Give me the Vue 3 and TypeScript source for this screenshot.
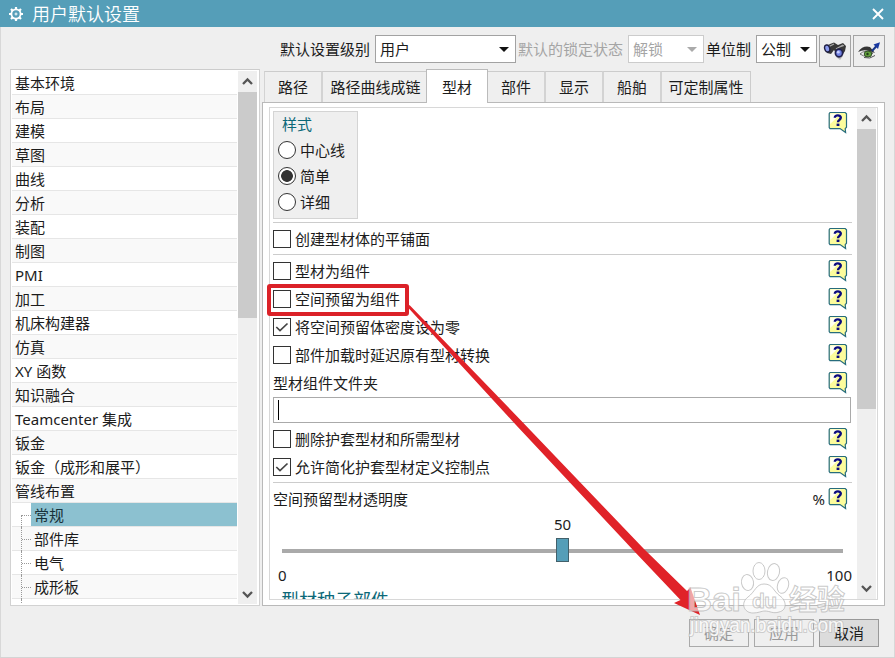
<script setup lang="ts">
import { defineComponent, h } from 'vue'

interface TreeRow { text: string; child?: boolean; selected?: boolean }
interface OptionRow { text: string; kind: 'check' | 'label' | 'percent'; checked?: boolean }

const rows: TreeRow[] = [
  ...['基本环境', '布局', '建模', '草图', '曲线', '分析', '装配', '制图', 'PMI', '加工', '机床构建器', '仿真', 'XY 函数', '知识融合', 'Teamcenter 集成', '钣金', '钣金（成形和展平）', '管线布置'].map((text) => ({ text })),
  { text: '常规', child: true, selected: true },
  { text: '部件库', child: true },
  { text: '电气', child: true },
  { text: '成形板', child: true },
]
const tabs: string[] = ['路径', '路径曲线成链', '型材', '部件', '显示', '船舶', '可定制属性']
const styles: string[] = ['中心线', '简单', '详细']
const componentOptions: OptionRow[] = [
  { text: '型材为组件', kind: 'check' },
  { text: '空间预留为组件', kind: 'check' },
  { text: '将空间预留体密度设为零', kind: 'check', checked: true },
  { text: '部件加载时延迟原有型材转换', kind: 'check' },
  { text: '型材组件文件夹', kind: 'label' },
]
const jacketOptions: OptionRow[] = [
  { text: '删除护套型材和所需型材', kind: 'check' },
  { text: '允许简化护套型材定义控制点', kind: 'check', checked: true },
]

const HelpIcon = defineComponent(() => () =>
  h('svg', { width: 20, height: 23, viewBox: '0 0 20 23' }, [
    h('path', { d: 'M2 1.5H17.2L18.5 2.8V16.2L17.2 17.6L17.6 21.6L12 17.6H2L1.2 16.6V2.6Z', fill: '#fcfc9c', stroke: '#276c7c', 'stroke-width': 1.2 }),
    h('path', { d: 'M2.2 13V2.4H13Z', fill: '#fffff0' }),
    h('path', { d: 'M6.8 6.8C7 3.6 12.8 3.6 12.8 6.6C12.8 8.9 10 8.8 10 11.3', fill: 'none', stroke: '#0b0b7c', 'stroke-width': 2.4 }),
    h('rect', { x: 8.6, y: 12.6, width: 2.8, height: 2.4, fill: '#0b0b7c' }),
  ]))
const CheckRow = defineComponent({
  props: { item: { type: Object as () => OptionRow, required: true } },
  setup(props) {
    return () => h('div', { class: 'opt' }, [
      props.item.kind === 'check'
        ? h('span', { class: 'box' }, props.item.checked
          ? [h('svg', { width: 16, height: 16, viewBox: '0 0 16 16' }, [h('path', { d: 'M2.3 8L6 11.6L13.5 4.5', fill: 'none', stroke: '#444', 'stroke-width': 1.7 })])]
          : [])
        : null,
      h('span', { class: 'opt-text' }, props.item.text),
      props.item.kind === 'percent' ? h('span', { class: 'percent' }, '%') : null,
      h(HelpIcon, { class: 'help' }),
    ])
  },
})
</script>

<template>
  <div class="window">
    <header class="title">
      <svg width="16" height="16" viewBox="0 0 16 16">
        <g stroke="#fff" fill="none">
          <circle cx="8" cy="8" r="4.6" stroke-width="1.8" />
          <circle cx="8" cy="8" r="1" stroke-width="1" />
          <path d="M8 1V3M8 13V15M1 8H3M13 8H15M3 3L4.5 4.5M11.5 11.5L13 13M13 3L11.5 4.5M4.5 11.5L3 13" stroke-width="2.2" />
        </g>
      </svg>
      <span class="caption">用户默认设置</span>
      <svg class="close" width="12" height="12" viewBox="0 0 12 12"><path d="M1 1L11 11M11 1L1 11" stroke="#fff" stroke-width="1.9" /></svg>
    </header>

    <div class="toolbar">
      <span class="lbl level">默认设置级别</span>
      <div class="select s1">用户<i class="caret"></i></div>
      <span class="lbl lock dim">默认的锁定状态</span>
      <div class="select s2 dim">解锁<i class="caret"></i></div>
      <span class="lbl unit">单位制</span>
      <div class="select s3">公制<i class="caret"></i></div>
      <button class="tool">
        <svg width="24" height="20" viewBox="0 0 24 20">
          <path d="M2 6L7 3L11 1.5L15 4L20 2L23 5L22 10L18 16L14 14L11 9L8 13L4 12Z" fill="#383838" />
          <path d="M6 5.5L11 3M13 8L20 4M15 6.5L21 4.5" stroke="#aaa" stroke-width="1.3" />
          <path d="M13 16L20 15L17 19Z" fill="#bbb" />
          <ellipse cx="4.2" cy="7.5" rx="2.5" ry="3.6" transform="rotate(-15 4.2 7.5)" fill="#8c9cf0" stroke="#202044" stroke-width="1.4" />
          <ellipse cx="16" cy="12" rx="3.6" ry="3.9" fill="#7080e0" stroke="#20204c" stroke-width="1.7" />
          <circle cx="15.3" cy="11.2" r="1.4" fill="#c4ccff" />
        </svg>
      </button>
      <button class="tool">
        <svg width="24" height="20" viewBox="0 0 24 20">
          <path d="M1 11Q6 4 13 6L18 12L12 10Q7 8 1 11Z" fill="#353535" />
          <path d="M3 13Q8 8 16 12Q10 18 3 13Z" fill="#eee" stroke="#555" stroke-width=".8" />
          <ellipse cx="11" cy="13" rx="3.8" ry="3" fill="#64a13c" stroke="#304f27" />
          <circle cx="10.5" cy="13" r="1.2" fill="#223a1b" />
          <path d="M7 16.5Q13 18.5 18 14.5" stroke="#555" fill="none" />
          <path d="M15 10L20 4.5" stroke="#163488" stroke-width="2" />
          <path d="M16.5 3.5L23 1.2L21 8Z" fill="#1838a0" />
        </svg>
      </button>
    </div>

    <main class="body">
      <aside class="tree">
        <div class="rows">
          <div v-for="row in rows" :key="row.text" class="row" :class="{ child: row.child, selected: row.selected }"><span>{{ row.text }}</span></div>
          <div class="row child last"></div>
        </div>
        <div class="scroll">
          <svg width="19" height="21" viewBox="0 0 19 21"><path d="M5 13L9.5 8.5L14 13" /></svg>
          <div class="thumb left-thumb"></div>
          <svg class="down" width="19" height="21" viewBox="0 0 19 21"><path d="M5 9L9.5 13.5L14 9" /></svg>
        </div>
      </aside>

      <section class="right">
        <nav class="tabs">
          <div v-for="(tab, i) in tabs" :key="tab" class="tab" :class="['t' + i, { active: i === 2 }]">{{ tab }}</div>
        </nav>
        <div class="panel">
          <div class="inner">
            <div class="content">
              <div class="top">
                <div class="group">
                  <div class="group-title">样式</div>
                  <div v-for="(s, i) in styles" :key="s" class="radio"><i :class="{ on: i === 1 }"></i>{{ s }}</div>
                </div>
                <HelpIcon class="help" />
              </div>
              <div class="block first"><CheckRow :item="{ text: '创建型材体的平铺面', kind: 'check' }" /></div>
              <div class="block second">
                <CheckRow v-for="o in componentOptions" :key="o.text" :item="o" />
                <div class="input"><i></i></div>
                <CheckRow v-for="o in jacketOptions" :key="o.text" :item="o" />
              </div>
              <div class="block third">
                <CheckRow :item="{ text: '空间预留型材透明度', kind: 'percent' }" />
                <div class="value">50</div>
                <div class="track"><i></i></div>
                <div class="ends"><span>0</span><span>100</span></div>
                <div class="next">型材种子部件</div>
              </div>
            </div>
            <div class="scroll">
              <svg width="19" height="21" viewBox="0 0 19 21"><path d="M5 13L9.5 8.5L14 13" /></svg>
              <div class="thumb right-thumb"></div>
              <svg class="down" width="19" height="21" viewBox="0 0 19 21"><path d="M5 8L9.5 12.5L14 8" /></svg>
            </div>
          </div>
        </div>
      </section>
    </main>

    <footer class="footer">
      <button class="btn off">确定</button>
      <button class="btn off">应用</button>
      <button class="btn">取消</button>
    </footer>

    <svg class="overlay" width="895" height="658" viewBox="0 0 895 658">
      <rect x="269" y="286" width="138" height="28" rx="1" fill="none" stroke="#db2128" stroke-width="4" />
      <path d="M407.5 307L409.5 305L521 420.5L644 549L687 591L690.5 587.5L700 615L674 603L680.5 600L634 551L516 425Z" fill="#e02228" />
      <g class="mark">
        <ellipse cx="747.5" cy="582.5" rx="6" ry="8" transform="rotate(-10 747.5 582.5)" />
        <ellipse cx="759" cy="571" rx="6" ry="8.5" />
        <ellipse cx="773.5" cy="572" rx="6" ry="8.5" transform="rotate(12 773.5 572)" />
        <ellipse cx="783" cy="585.5" rx="5.5" ry="8" transform="rotate(18 783 585.5)" />
        <path d="M764 584C756 584 755 592 748 597C740 603 744 613 753 613C759 613 761 611 765 611C770 611 773 614 779 612C788 610 786 600 780 596C773 591 773 584 764 584Z" />
        <text x="687" y="611" class="brand" textLength="54" lengthAdjust="spacingAndGlyphs">Bai</text>
        <text x="752" y="608" class="du" textLength="25">du</text>
        <text x="789" y="610" class="cn" textLength="56">经验</text>
        <text x="690" y="632" class="url" textLength="154" lengthAdjust="spacingAndGlyphs">jingyan.baidu.com</text>
      </g>
    </svg>
  </div>
</template>

<style>
body { margin: 0; overflow: hidden; }
</style>

<style scoped>
.window { position: relative; width: 895px; height: 658px; box-sizing: border-box; display: flex; flex-direction: column; background: #efefef; border-bottom: 1px solid #d4d4d4; font: 15px/22px "Noto Sans", "Noto Sans CJK SC", sans-serif; color: #1c1c1c; overflow: hidden; white-space: nowrap; box-shadow: inset 1px 0 #d8d8d8, inset -1px 0 #d8d8d8; }
.window :deep(*) { box-sizing: border-box; }
svg { display: block; flex: none; }
.title { height: 27px; flex: none; background: #559eb8; color: #fff; display: flex; align-items: center; padding: 0 11px 0 8px; }
.caption { font-size: 18px; margin-left: 8px; flex: 1; font-weight: 350; }
.toolbar { height: 42px; flex: none; display: flex; padding: 8px 0 0 280px; }
.lbl { flex: none; height: 28px; line-height: 28px; }
.level { width: 95px; }
.lock { width: 112px; padding-left: 2px; }
.unit { width: 52px; padding-left: 2px; }
.select { height: 28px; flex: none; border: 1px solid #a2a2a2; background: #fff; padding: 0 6px 0 4px; display: flex; align-items: center; justify-content: space-between; }
.caret { border: 5px solid transparent; border-top-color: #111; border-bottom: 0; }
.s1 { width: 141px; }
.s2 { width: 76px; border-color: #ccc; }
.s3 { width: 61px; }
.dim { color: #a5a5a5; }
.dim .caret { border-top-color: #aaa; }
.tool { width: 32px; height: 32px; flex: none; margin-left: 2px; padding: 0; border: 1px solid #a4a4a4; background: #eee; display: flex; align-items: center; justify-content: center; }
.body { height: 537px; flex: none; display: flex; padding-left: 10px; }
.tree { width: 250px; flex: none; border: 1px solid #d2d2d2; border-top-color: #ccc; background: #fff; display: flex; padding: 1px 2px 1px 1px; }
.rows { width: 225px; height: 533px; overflow: hidden; margin-right: 1px; }
.row { height: 24px; border-bottom: 1px solid #e6e6e6; padding-left: 3px; line-height: 24px; display: flex; }
.row:nth-child(even) { background: #f9f9f9; }
.row.child { padding-left: 9px; }
.row.child::before { content: ""; width: 10px; height: 24px; flex: none; border-left: 1px dotted #999; background: repeating-linear-gradient(90deg, #999 0 1px, transparent 1px 2px) 0 12px / 9px 1px no-repeat; }
.row.child.selected::before { height: 12px; margin-top: 12px; background-position: 0 0; }
.row.child span { flex: 1; padding-left: 3px; height: 23px; margin-left: -1px; }
.row.selected span { background: #8cc1d0; color: #17313a; }
.row.last::before { background: none; }
.scroll { width: 19px; flex: none; background: #efefef; display: flex; flex-direction: column; }
.scroll path { fill: none; stroke: #555; stroke-width: 2.3; }
.thumb { background: #cbcbcb; }
.left-thumb { height: 226px; }
.right-thumb { height: 280px; }
.down { margin-top: auto; }
.right { width: 623px; margin-left: 2px; display: flex; flex-direction: column; }
.tabs { height: 34px; flex: none; margin-bottom: -1px; display: flex; align-items: flex-end; padding-left: 2px; z-index: 1; }
.tab { height: 31px; margin-bottom: 1px; border: 1px solid #ccc; border-left: 2px solid #d3d3d3; border-right: 0; border-bottom: 0; background: #efefef; text-align: center; line-height: 31px; flex: none; }
.t0 { width: 57px; border-left-width: 1px; }
.t1 { width: 106px; padding-left: 1px; }
.t2 { width: 61px; }
.t3 { width: 56px; border-left: 0; }
.t4 { width: 58px; }
.t5 { width: 58px; }
.t6 { width: 91px; border-right: 1px solid #ccc; }
.tab.active { height: 34px; margin-bottom: 0; margin-left: -1px; width: 62px; background: #fff; border-color: #bbb; border-left: 1px solid #bbb; border-right: 1px solid #bbb; line-height: 34px; }
.panel { height: 504px; border: 1px solid #b9b9b9; background: #fff; padding: 4px 6px 6px 6px; }
.inner { height: 493px; border: 1px solid #d8d8d8; display: flex; padding-right: 2px; }
.content { width: 587px; height: 491px; overflow: hidden; flex: none; padding: 3px 5px 0 3px; }
.top { height: 111px; display: flex; justify-content: space-between; padding-right: 4px; }
.group { width: 85px; height: 108px; background: #efefef; border: 1px solid #d4d4d4; padding: 1px 0 0 4px; }
.group-title { color: #0c6878; padding-left: 4px; height: 24px; }
.radio { height: 26px; display: flex; align-items: center; gap: 4px; }
.radio i { width: 18px; height: 18px; border: 1px solid #333; border-radius: 50%; background: #fff; }
.radio i.on { background: radial-gradient(circle, #333 0 5.5px, #fff 6.2px); }
.block { border-top: 1px solid #ccc; }
.first { height: 32px; padding-top: 2px; }
.second { height: 228px; padding-top: 2px; }
.third { padding-top: 2px; }
.content :deep(.opt) { height: 28px; display: flex; align-items: center; padding-right: 4px; }
.content :deep(.box) { width: 18px; height: 18px; border: 1px solid #333; background: #fff; margin-right: 4px; flex: none; }
.content :deep(.opt-text) { flex: 1; }
.content :deep(.percent) { margin-right: 3px; }
.content :deep(svg) { display: block; }
.content :deep(.help) { flex: none; }
.content :deep(.opt .help) { margin-bottom: 2px; }
.input { height: 26px; width: 578px; margin: 0 0 2px; border: 1px solid #aaa; padding: 2px 4px; }
.input i { display: block; width: 1px; height: 20px; background: #000; }
.value { height: 22px; text-align: center; margin-top: 0; }
.track { height: 24px; margin: 3px 9px 0; display: flex; justify-content: center; align-items: center; background: linear-gradient(#aaa, #aaa) 0 11px / 100% 4px no-repeat; }
.track i { width: 13px; height: 24px; background: #559eb8; border: 1px solid #42606b; }
.ends { height: 22px; margin-top: 2px; padding: 0 0 0 5px; display: flex; justify-content: space-between; }
.next { color: #0c6878; padding-left: 8px; margin-top: 2px; font-size: 18px; line-height: 24px; }
.footer { display: flex; gap: 5px; padding: 13px 0 0 689px; }
.btn { width: 60px; height: 28px; padding: 0; border: 1px solid #999; background: #dcdcdc; color: #1c1c1c; font: inherit; }
.btn.off { background: #efefef; color: #999; border-color: #aaa; }
.overlay { position: absolute; left: 0; top: 0; pointer-events: none; z-index: 2; }
.mark { fill: rgba(255, 255, 255, .6); stroke: rgba(178, 178, 178, .7); stroke-width: 1; }
.brand { font: bold 34px "Liberation Sans", sans-serif; }
.du { font: bold 21px "Liberation Sans", sans-serif; }
.cn { font: bold 28px "Noto Sans CJK SC", sans-serif; }
.url { font: 20px "Liberation Sans", sans-serif; stroke: rgba(190, 190, 190, .7); stroke-width: 2px; paint-order: stroke; fill: rgba(255, 255, 255, .9); }
</style>
